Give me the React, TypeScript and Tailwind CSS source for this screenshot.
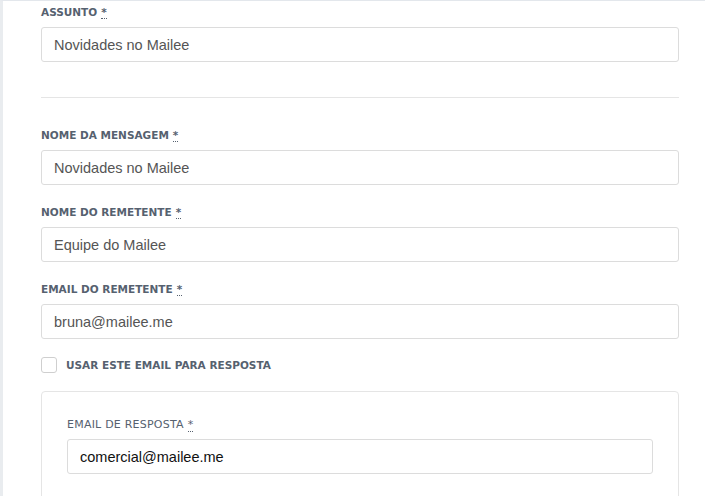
import React from 'react';

const labelBase = "block text-[10.5px] leading-[15px] uppercase text-[#56616f] mb-[7px] font-['DejaVu_Sans',sans-serif]";
const labelCls = labelBase + ' font-semibold';
const inputCls =
  "block w-full h-[35px] px-[12px] border border-[#dcdcdc] rounded-[3px] bg-white text-[14.5px] text-[#555] font-['Liberation_Sans',Arial,sans-serif] outline-none";

function Req() {
  return (
    <abbr title="obrigatório" className="no-underline border-b border-dotted border-[#56616f] ml-[4px] leading-none">
      *
    </abbr>
  );
}

function Field({ label, value, dark }: { label: string; value: string; dark?: boolean }) {
  return (
    <div className="mb-[20px]">
      <label className={dark ? labelBase + ' font-normal !text-[11px] tracking-[0.02em]' : labelCls}>
        {label}
        <Req />
      </label>
      <input className={inputCls + (dark ? ' !text-[#111]' : '')} defaultValue={value} readOnly />
    </div>
  );
}

export default function App() {
  const [useReply, setUseReply] = React.useState(false);

  return (
    <div className="w-[705px] h-[496px] overflow-hidden bg-white border-t border-t-[#e3e7ec] border-l-[3px] border-l-[#e9ecef]">
      <div className="pl-[38px] pr-[26px] pt-[4px]">
        <div>
          <label className={labelCls}>
            Assunto
            <Req />
          </label>
          <input className={inputCls} defaultValue="Novidades no Mailee" readOnly />
        </div>

        <hr className="mt-[35px] mb-[30px] border-0 border-t border-[#e5e5e5]" />

        <Field label="Nome da mensagem" value="Novidades no Mailee" />
        <Field label="Nome do remetente" value="Equipe do Mailee" />
        <div>
          <label className={labelCls}>
            Email do remetente
            <Req />
          </label>
          <input className={inputCls} defaultValue="bruna@mailee.me" readOnly />
        </div>

        <label className="flex items-center mt-[18px] cursor-pointer">
          <span
            onClick={() => setUseReply(!useReply)}
            className="w-[16px] h-[16px] border border-[#cfcfcf] rounded-[3px] bg-white mr-[9px]"
          />
          <span className="text-[10.5px] leading-[15px] font-semibold uppercase text-[#56616f] font-['DejaVu_Sans',sans-serif]">
            Usar este email para resposta
          </span>
        </label>

        <div className="mt-[18px] border border-[#e5e5e5] rounded-[4px] px-[25px] pt-[25px] pb-[25px]">
          <Field label="Email de resposta" value="comercial@mailee.me" dark />
        </div>
      </div>
    </div>
  );
}
